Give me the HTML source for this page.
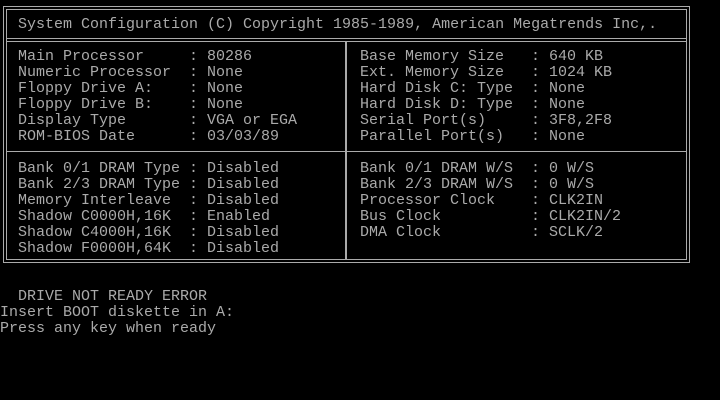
<!DOCTYPE html>
<html><head><style>
html,body{margin:0;padding:0;background:#000;width:720px;height:400px;overflow:hidden;position:relative}
pre{position:absolute;margin:0;font-family:"Liberation Mono",monospace;font-size:15px;line-height:16px;color:#aaa;white-space:pre}
.l{position:absolute;background:#aaa}
</style></head><body>
<div class="l" style="left:3px;top:6px;width:687px;height:1px"></div>
<div class="l" style="left:6px;top:9px;width:681px;height:1px"></div>
<div class="l" style="left:3px;top:262px;width:687px;height:1px"></div>
<div class="l" style="left:6px;top:259px;width:681px;height:1px"></div>
<div class="l" style="left:3px;top:6px;width:1px;height:257px"></div>
<div class="l" style="left:6px;top:9px;width:1px;height:251px"></div>
<div class="l" style="left:689px;top:6px;width:1px;height:257px"></div>
<div class="l" style="left:686px;top:9px;width:1px;height:251px"></div>
<div class="l" style="left:6px;top:38px;width:681px;height:1px"></div>
<div class="l" style="left:6px;top:41px;width:681px;height:1px"></div>
<div class="l" style="left:6px;top:151px;width:681px;height:1px"></div>
<div class="l" style="left:345px;top:41px;width:2px;height:218px"></div>
<pre style="left:18px;top:17px">System Configuration (C) Copyright 1985-1989, American Megatrends Inc,.</pre>
<pre style="left:18px;top:49px">Main Processor     : 80286
Numeric Processor  : None
Floppy Drive A:    : None
Floppy Drive B:    : None
Display Type       : VGA or EGA
ROM-BIOS Date      : 03/03/89

Bank 0/1 DRAM Type : Disabled
Bank 2/3 DRAM Type : Disabled
Memory Interleave  : Disabled
Shadow C0000H,16K  : Enabled
Shadow C4000H,16K  : Disabled
Shadow F0000H,64K  : Disabled</pre>
<pre style="left:360px;top:49px">Base Memory Size   : 640 KB
Ext. Memory Size   : 1024 KB
Hard Disk C: Type  : None
Hard Disk D: Type  : None
Serial Port(s)     : 3F8,2F8
Parallel Port(s)   : None

Bank 0/1 DRAM W/S  : 0 W/S
Bank 2/3 DRAM W/S  : 0 W/S
Processor Clock    : CLK2IN
Bus Clock          : CLK2IN/2
DMA Clock          : SCLK/2</pre>
<pre style="left:0;top:289px">  DRIVE NOT READY ERROR
Insert BOOT diskette in A:
Press any key when ready</pre>
</body></html>
